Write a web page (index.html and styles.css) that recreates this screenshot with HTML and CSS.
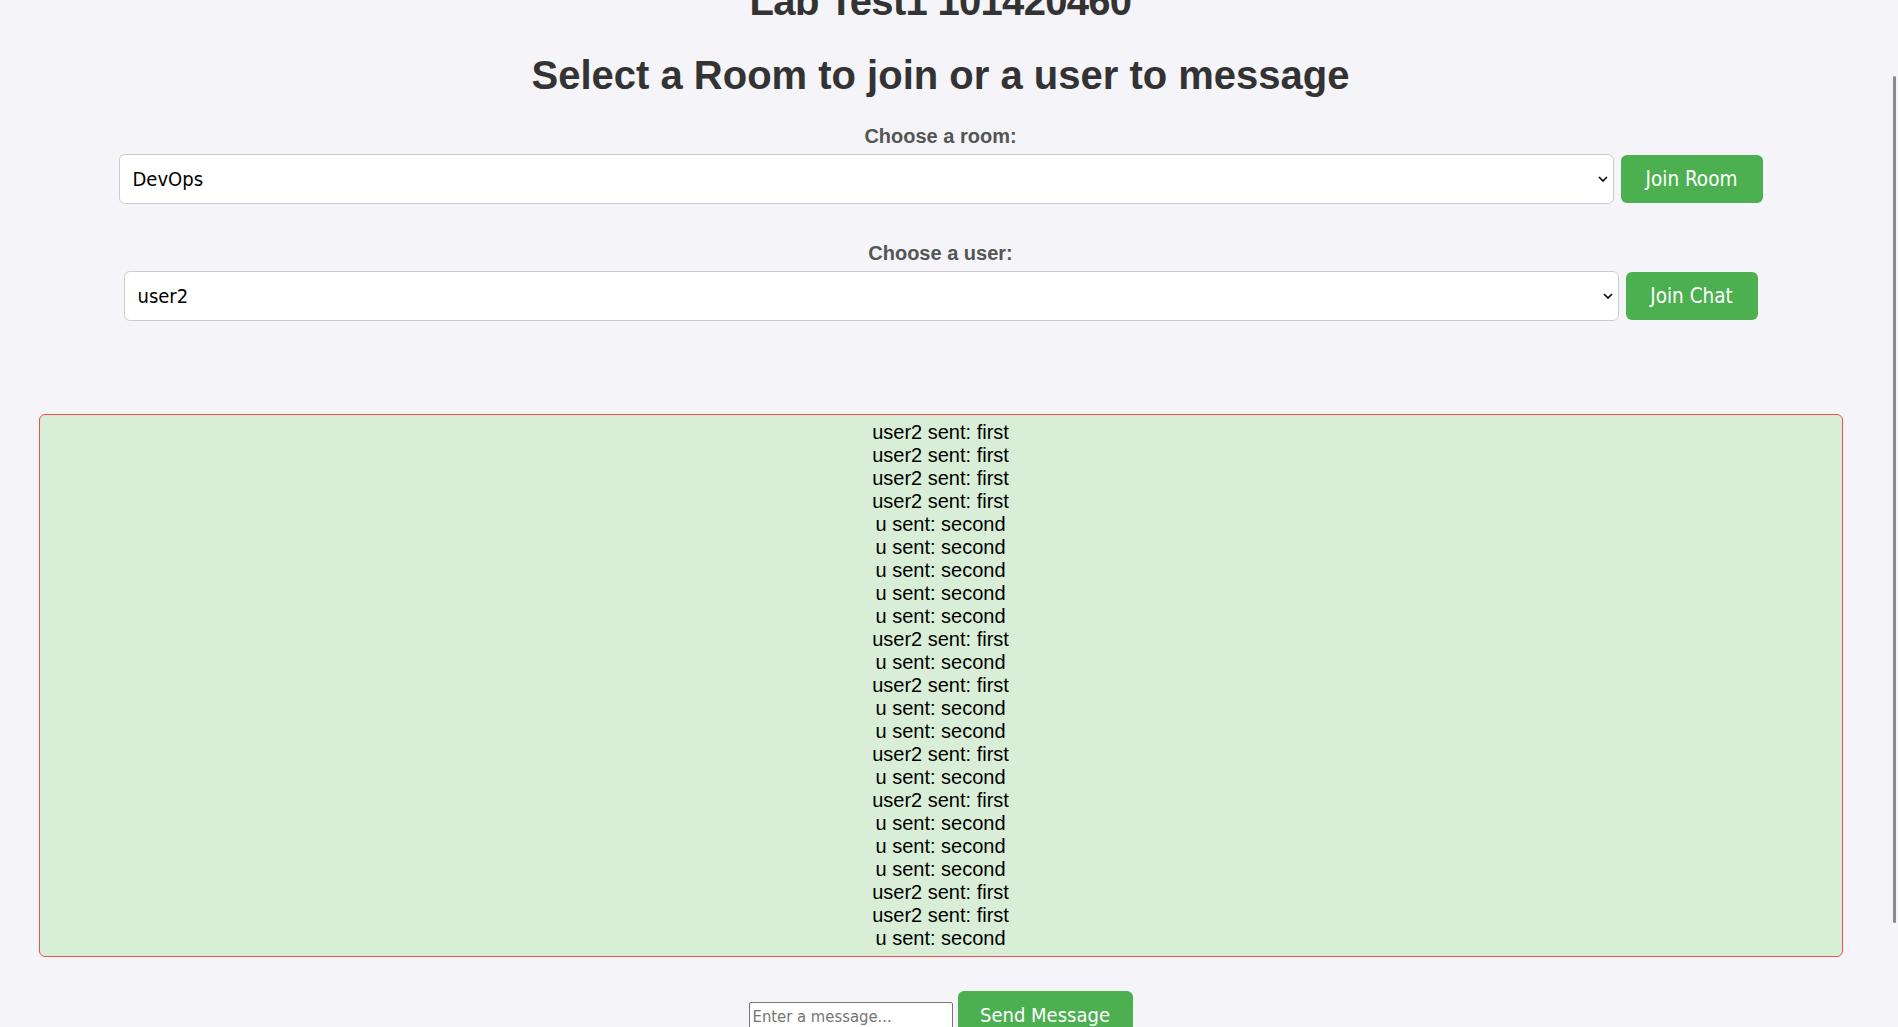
FILE: index.html
```html
<!DOCTYPE html>
<html lang="en">
<head>
<meta charset="utf-8">
<title>Lab Test1 101420460</title>
<link rel="stylesheet" href="styles.css">
</head>
<body>
<div class="viewport">
  <main class="page">
    <h1 class="title">Lab Test1 101420460</h1>
    <h2 class="subtitle">Select a Room to join or a user to message</h2>

    <section class="picker">
      <label class="picker-label" for="room">Choose a room:</label>
      <div class="picker-row">
        <div class="select-wrap">
          <select class="select" id="room"><option>DevOps</option></select>
          <svg class="chevron" width="10" height="6" viewBox="0 0 10 6"><path d="M1 1l4 4 4-4" fill="none" stroke="#000" stroke-width="1.6"/></svg>
        </div>
        <button class="btn btn-room">Join Room</button>
      </div>
    </section>

    <section class="picker picker-user">
      <label class="picker-label" for="user">Choose a user:</label>
      <div class="picker-row">
        <div class="select-wrap">
          <select class="select" id="user"><option>user2</option></select>
          <svg class="chevron" width="10" height="6" viewBox="0 0 10 6"><path d="M1 1l4 4 4-4" fill="none" stroke="#000" stroke-width="1.6"/></svg>
        </div>
        <button class="btn btn-chat">Join Chat</button>
      </div>
    </section>

    <div class="messages">
      <div class="msg">user2 sent: first</div>
      <div class="msg">user2 sent: first</div>
      <div class="msg">user2 sent: first</div>
      <div class="msg">user2 sent: first</div>
      <div class="msg">u sent: second</div>
      <div class="msg">u sent: second</div>
      <div class="msg">u sent: second</div>
      <div class="msg">u sent: second</div>
      <div class="msg">u sent: second</div>
      <div class="msg">user2 sent: first</div>
      <div class="msg">u sent: second</div>
      <div class="msg">user2 sent: first</div>
      <div class="msg">u sent: second</div>
      <div class="msg">u sent: second</div>
      <div class="msg">user2 sent: first</div>
      <div class="msg">u sent: second</div>
      <div class="msg">user2 sent: first</div>
      <div class="msg">u sent: second</div>
      <div class="msg">u sent: second</div>
      <div class="msg">u sent: second</div>
      <div class="msg">user2 sent: first</div>
      <div class="msg">user2 sent: first</div>
      <div class="msg">u sent: second</div>
    </div>

    <div class="composer">
      <input class="composer-input" type="text" placeholder="Enter a message...">
      <button class="btn btn-send">Send Message</button>
    </div>
  </main>
  <div class="scrollbar"><div class="scrollbar-thumb"></div></div>
</div>
</body>
</html>
```

FILE: styles.css
```css
* { box-sizing: border-box; }

html, body {
  margin: 0;
  padding: 0;
  background: #f4f4f9;
}

body {
  font-family: "Liberation Sans", Arial, sans-serif;
  color: #333;
}

.viewport {
  display: flex;
  height: 1027px;
  overflow: hidden;
}

.page {
  flex: 1;
  min-width: 0;
  display: flex;
  flex-direction: column;
}

.title,
.subtitle {
  margin: 0;
  font-size: 40px;
  line-height: 46px;
  font-weight: bold;
  text-align: center;
  color: #333;
}

.title {
  margin-top: -22px;
  letter-spacing: -0.7px;
}

.subtitle { margin-top: 28px; }

.picker {
  display: flex;
  flex-direction: column;
  align-items: center;
  margin-top: 27px;
}

.picker-user { margin-top: 38px; }

.picker-label {
  font-size: 20px;
  line-height: 23px;
  font-weight: bold;
  color: #555;
}

.picker-row {
  display: flex;
  align-items: center;
  gap: 7px;
  margin-top: 6px;
}

.select-wrap {
  position: relative;
  width: 1495px;
  height: 50px;
}

.select {
  appearance: none;
  -webkit-appearance: none;
  width: 100%;
  height: 100%;
  border: 1px solid #cccccc;
  border-radius: 6px;
  background: #fff;
  padding: 0 30px 0 13px;
  font-family: "DejaVu Sans", Verdana, sans-serif;
  font-stretch: semi-condensed;
  font-size: 20px;
  color: #000;
}

.chevron {
  position: absolute;
  right: 6px;
  top: 22px;
}

.btn {
  height: 48px;
  border: none;
  border-radius: 6px;
  background: #4caf50;
  color: #fff;
  font-family: "DejaVu Sans", Verdana, sans-serif;
  font-stretch: semi-condensed;
  font-size: 20.5px;
  padding: 0;
  cursor: pointer;
}

.btn-room { width: 142px; }
.btn-chat { width: 132px; }
.btn-send { width: 175px; font-size: 20px; }

.messages {
  width: 1804px;
  margin: 93px auto 0;
  padding: 6px 0;
  border: 1px solid #f0524a;
  border-radius: 6px;
  background: #d9eed6;
  text-align: center;
  font-size: 20px;
  line-height: 23px;
  color: #000;
}

.composer {
  display: flex;
  justify-content: center;
  align-items: baseline;
  gap: 5px;
  margin-top: 34px;
}

.composer-input {
  width: 204px;
  height: 30px;
  padding: 1px 3px;
  border: 1px solid #767676;
  border-radius: 2px;
  background: #fff;
  font-family: "DejaVu Sans", Verdana, sans-serif;
  font-stretch: semi-condensed;
  font-size: 16.5px;
}

.composer-input::placeholder { color: #757575; }

.scrollbar {
  width: 17px;
  flex: none;
  padding: 76px 0 0 12px;
}

.scrollbar-thumb {
  width: 3px;
  height: 847px;
  border-radius: 2px;
  background: #8b8b8b;
}
```
